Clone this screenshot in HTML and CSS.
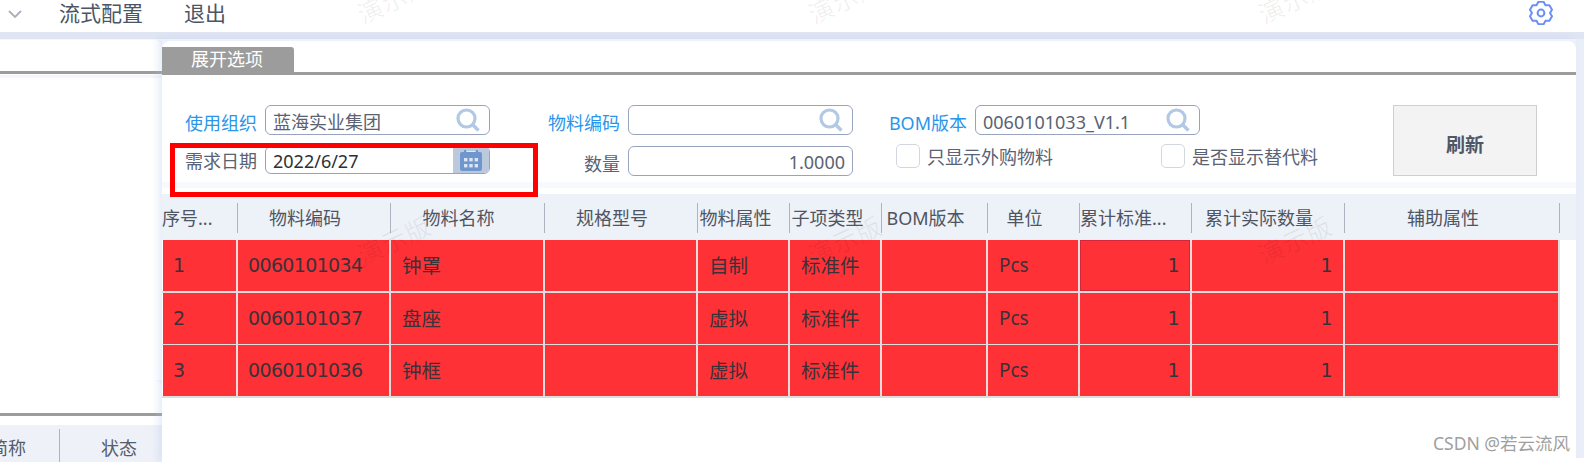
FILE: index.html
```html
<!DOCTYPE html>
<html lang="zh-CN">
<head>
<meta charset="utf-8">
<title>展开选项</title>
<link rel="stylesheet" href="styles.css">
</head>
<body>
<div class="page">
  <header class="topbar">
    <svg class="chevron" viewBox="0 0 14 8" width="14" height="8"><path d="M1 1l6 6 6-6" fill="none" stroke="#aab0bb" stroke-width="1.8"/></svg>
    <span class="nav first">流式配置</span>
    <span class="nav">退出</span>
    <svg class="gear" viewBox="0 0 24 24" width="24" height="24"><polygon points="9.41,0.8 14.59,0.8 16.5,4.21 20.41,4.16 23,8.64 21,12 23,15.36 20.41,19.84 16.5,19.79 14.59,23.2 9.41,23.2 7.5,19.79 3.59,19.84 1,15.36 3,12 1,8.64 3.59,4.16 7.5,4.21" fill="none" stroke="#6d8ff2" stroke-width="2" stroke-linejoin="round"/><circle cx="12" cy="12" r="3.4" fill="none" stroke="#6d8ff2" stroke-width="2"/></svg>
  </header>
  <div class="workspace">
    <aside class="side">
      <section class="side-top">
        <div class="side-rule"></div>
      </section>
      <section class="side-bottom">
        <div class="side-rule second"></div>
        <div class="side-head">
          <span class="side-col name">简称</span>
          <span class="side-col">状态</span>
        </div>
      </section>
    </aside>
    <main class="panel">
      <section class="options">
        <div class="tabs"><span class="tab">展开选项</span></div>
        <form class="form">
          <label class="lbl link">使用组织</label>
          <div class="input"><span class="val">蓝海实业集团</span>
            <svg class="search" viewBox="0 0 24 24" width="24" height="24"><circle cx="10.5" cy="10.5" r="8.5" fill="none" stroke="#b2c8e5" stroke-width="3.2"/><path d="M16.5 16.5l6 6" stroke="#b2c8e5" stroke-width="3.4"/></svg>
          </div>
          <label class="lbl link">物料编码</label>
          <div class="input"><span class="val"></span>
            <svg class="search" viewBox="0 0 24 24" width="24" height="24"><circle cx="10.5" cy="10.5" r="8.5" fill="none" stroke="#b2c8e5" stroke-width="3.2"/><path d="M16.5 16.5l6 6" stroke="#b2c8e5" stroke-width="3.4"/></svg>
          </div>
          <label class="lbl link">BOM版本</label>
          <div class="input"><span class="val">0060101033_V1.1</span>
            <svg class="search" viewBox="0 0 24 24" width="24" height="24"><circle cx="10.5" cy="10.5" r="8.5" fill="none" stroke="#b2c8e5" stroke-width="3.2"/><path d="M16.5 16.5l6 6" stroke="#b2c8e5" stroke-width="3.4"/></svg>
          </div>
          <button class="refresh" type="button">刷新</button>

          <label class="lbl date-lbl">需求日期</label>
          <div class="input date"><span class="val">2022/6/27</span>
            <span class="cal"><svg viewBox="0 0 24 24" width="24" height="24"><path d="M3 4h18a2 2 0 0 1 2 2v15a2 2 0 0 1-2 2H3a2 2 0 0 1-2-2V6a2 2 0 0 1 2-2z" fill="#7096cf"/><path d="M6 2v4M18 2v4" stroke="#7096cf" stroke-width="2"/><path d="M8 3.5h8" stroke="#e4eaf4" stroke-width="1"/><g fill="#dbe5f3"><rect x="5" y="10" width="3.4" height="3.4"/><rect x="10.3" y="10" width="3.4" height="3.4"/><rect x="15.6" y="10" width="3.4" height="3.4"/><rect x="5" y="16" width="3.4" height="3.4"/><rect x="10.3" y="16" width="3.4" height="3.4"/><rect x="15.6" y="16" width="3.4" height="3.4"/></g></svg></span>
          </div>
          <label class="lbl qty-lbl">数量</label>
          <div class="input num"><span class="val">1.0000</span></div>
          <div class="checks">
            <label class="check first"><i class="box"></i><span class="check-text">只显示外购物料</span></label>
            <label class="check"><i class="box"></i><span class="check-text">是否显示替代料</span></label>
          </div>
        </form>
      </section>
      <section class="grid-card">
        <div class="row head">
          <div class="hc">序号...</div><div class="hc">物料编码</div><div class="hc">物料名称</div><div class="hc">规格型号</div><div class="hc">物料属性</div><div class="hc">子项类型</div><div class="hc">BOM版本</div><div class="hc">单位</div><div class="hc">累计标准...</div><div class="hc">累计实际数量</div><div class="hc">辅助属性</div>
        </div>
        <div class="row body">
          <div class="c d">1</div><div class="c d">0060101034</div><div class="c">钟罩</div><div class="c"></div><div class="c">自制</div><div class="c">标准件</div><div class="c"></div><div class="c u">Pcs</div><div class="c d r focus">1</div><div class="c d r">1</div><div class="c"></div>
        </div>
        <div class="row body">
          <div class="c d">2</div><div class="c d">0060101037</div><div class="c">盘座</div><div class="c"></div><div class="c">虚拟</div><div class="c">标准件</div><div class="c"></div><div class="c u">Pcs</div><div class="c d r">1</div><div class="c d r">1</div><div class="c"></div>
        </div>
        <div class="row body">
          <div class="c d">3</div><div class="c d">0060101036</div><div class="c">钟框</div><div class="c"></div><div class="c">虚拟</div><div class="c">标准件</div><div class="c"></div><div class="c u">Pcs</div><div class="c d r">1</div><div class="c d r">1</div><div class="c"></div>
        </div>
      </section>
    </main>
    <div class="strip"></div>
  </div>
  <span class="wm w1">演示版</span><span class="wm w2">演示版</span><span class="wm w3">演示版</span>
  <span class="wm w4">演示版</span><span class="wm w5">演示版</span><span class="wm w6">演示版</span>
  <div class="redbox"></div>
  <div class="csdn">CSDN @若云流风</div>
</div>
</body>
</html>
```

FILE: styles.css
```css
* { box-sizing: border-box; }
html, body { margin: 0; padding: 0; }
body { font-family: "Noto Sans", "Noto Sans CJK SC", sans-serif; font-size: 18px; color: #5a6273; background: #fff; }
.page { position: relative; width: 1584px; height: 462px; overflow: hidden; background: #fff; }

.topbar { display: flex; align-items: center; height: 32px; padding: 0 31px 6px 8px; background: #fff; }
.chevron { flex: none; margin-top: 1px; }
.nav { font-size: 21px; line-height: 28px; color: #4c5566; margin-top: 0; margin-left: 22px; width: 84px; white-space: nowrap; }
.nav.first { margin-left: 37px; width: 103px; }
.gear { margin-left: auto; margin-top: -1px; flex: none; }

.workspace { display: flex; height: 430px; border-top: 7px solid #dfe5f2; background: #fff; }

.side { flex: 0 0 162px; min-width: 0; display: flex; flex-direction: column; background: #f4f6fd; }
.side-top { height: 341px; margin-top: 1px; background: #fff; border-top-right-radius: 8px; padding-top: 31px; }
.side-rule { height: 3px; background: #9c9c9c; box-shadow: 0 4px 0 #f3f6fd; }
.side-bottom { flex: 1; background: #fff; border-top-right-radius: 8px; padding-top: 33px; }
.side-rule.second { box-shadow: none; }
.side-head { display: flex; height: 37px; margin-top: 9px; background: #eef1f8; align-items: flex-start; padding-top: 4px; color: #555c6a; overflow: hidden; }
.side-col { flex: 0 0 102px; min-width: 0; text-align: center; line-height: 28px; padding-left: 16px; padding-top: 5px; }
.side-col.name { flex: 0 0 60px; height: 33px; text-align: right; padding: 5px 33px 0 0; border-right: 1px solid #aeb3bf; white-space: nowrap; direction: rtl; }

.panel { flex: 0 0 1414px; display: flex; flex-direction: column; background: #edf1f9; box-shadow: -4px 0 7px rgba(170, 185, 235, .28); position: relative; }
.options { height: 147px; margin-top: 2px; background: #fff; border-radius: 8px 8px 0 0; box-shadow: inset 0 -6px 0 #f7f9fd; }
.tabs { height: 34px; padding-top: 6px; border-bottom: 3px solid #9c9c9c; display: flex; }
.tab { width: 132px; height: 25px; background: #9c9c9c; color: #fff; border-top-right-radius: 3px; font-size: 18px; line-height: 25px; padding-left: 29px; }

.form { display: grid; grid-template-columns: 103px 225px 138px 225px 122px 225px 193px 144px; grid-template-rows: 30px 30px; row-gap: 11px; padding-top: 30px; }
.lbl { text-align: right; padding-right: 8px; line-height: 30px; padding-top: 3px; height: 30px; white-space: nowrap; }
.lbl.link { color: #2b95ec; }
.date-lbl { grid-column: 1; grid-row: 2; padding-top: 0; }
.qty-lbl { grid-column: 3; grid-row: 2; }
.input { display: flex; align-items: center; justify-content: space-between; border: 1px solid #98a3bd; border-radius: 6px; padding-left: 7px; padding-right: 9px; line-height: 28px; color: #5a6273; background: #fff; }
.val { padding-top: 3px; }
.search { flex: none; }
.input.date { grid-column: 2; grid-row: 2; height: 28px; color: #2d3038; padding-right: 0; overflow: hidden; }
.input.date .val { padding-top: 1px; }
.cal { display: flex; align-items: center; justify-content: center; width: 36px; height: 27px; background: #bcc8db; }
.input.num { grid-column: 4; grid-row: 2; justify-content: flex-end; padding-right: 7px; }
.input.num .val { padding-top: 1px; }
.checks { grid-column: 5 / 8; grid-row: 2; display: flex; padding-left: 43px; margin-top: -2px; align-items: flex-start; }
.check { display: flex; align-items: flex-start; gap: 7px; height: 24px; line-height: 24px; color: #5a6273; white-space: nowrap; }
.check.first { width: 265px; }
.check-text { margin-top: 1px; }
.box { display: block; width: 24px; height: 24px; border: 1px solid #d2d6df; border-radius: 5px; background: #fff; }
.refresh { grid-column: 8; grid-row: 1 / 3; border: 1px solid #cfcfcf; background: #f3f3f3; color: #4f5666; font: bold 19px "Noto Sans", "Noto Sans CJK SC", sans-serif; padding: 7px 0 0; }

.grid-card { flex: 1; padding-top: 6px; background: #fff; position: relative; }
.row { display: grid; grid-template-columns: 76px 153px 154px 153px 92px 92px 106px 92px 112px 153px 215px; }
.head { height: 46px; background: #edf1f8; padding-top: 9px; width: 1414px; }
.hc { height: 30px; border-right: 1px solid #aeb3bf; padding-right: 18px; text-align: center; line-height: 31px; color: #4f5562; white-space: nowrap; }
.hc:first-child { text-align: left; padding-right: 0; }
.hc:nth-child(5), .hc:nth-child(6) { padding-right: 16px; }
.hc:nth-child(9) { text-align: left; padding-right: 0; }
.body { width: 1398px; height: 52px; border-bottom: 1px solid #ddd; }
.head + .body { height: 53px; border-bottom-width: 2px; }
.body:last-child { height: 53px; border-bottom-width: 2px; }
.c { background: #fe3137; color: #3b3138; border-right: 2px solid #ddd; padding: 0 11px; font-size: 19.5px; line-height: 51px; white-space: nowrap; }
.c:first-child { margin-left: 1px; }
.d { font-family: "DejaVu Sans", sans-serif; font-size: 19px; letter-spacing: -0.65px; padding-left: 10px; }
.u { font-size: 19px; }
.r { text-align: right; }
.focus { box-shadow: inset 0 0 0 1px #d8243c; }

.strip { flex: 0 0 8px; height: 419px; background: #e9eef8; }

.wm { position: absolute; font-size: 25px; line-height: 30px; letter-spacing: 1px; color: rgba(0, 0, 0, .06); transform: rotate(-25deg); white-space: nowrap; }
.w1 { left: 355px; top: -16px; }
.w2 { left: 806px; top: -16px; }
.w3 { left: 1256px; top: -16px; }
.w4 { left: 355px; top: 225px; }
.w5 { left: 806px; top: 225px; }
.w6 { left: 1256px; top: 225px; }

.redbox { position: absolute; left: 170px; top: 143px; width: 368px; height: 54px; border: 5px solid #ff0000; }
.csdn { position: absolute; left: 1433px; top: 431px; font-size: 17.5px; line-height: 24px; color: #a0a0a0; white-space: nowrap; }
```
